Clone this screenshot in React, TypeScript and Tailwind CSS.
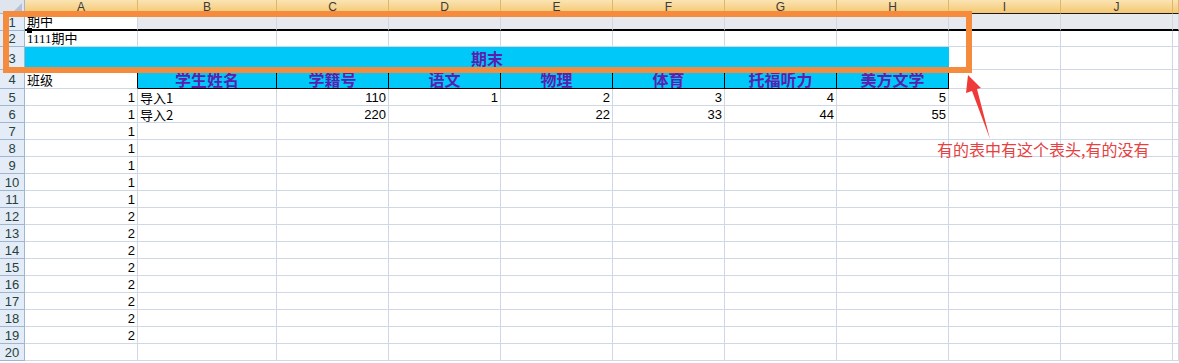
import React from 'react';

const cols = ['A', 'B', 'C', 'D', 'E', 'F', 'G', 'H', 'I', 'J', ''];
const dataCols = ['A', 'B', 'C', 'D', 'E', 'F', 'G', 'H', 'I', 'J', 'K'];

const grid = 'border-r border-b border-[#d0d7e5]';
const sans = "font-['Liberation_Sans','Noto_Sans_CJK_SC',sans-serif]";
const serif = "font-['Liberation_Serif','Noto_Sans_CJK_SC',serif]";
const cjk = "font-['Noto_Sans_CJK_SC',sans-serif]";

function RowHead({ n, className = '' }: { n: number; className?: string }) {
  return (
    <div
      className={`flex items-center justify-center border-r border-b border-[#9eb6ce] bg-[#e4ecf7] text-[13px] leading-none text-[#27413e] ${sans} ${className}`}
    >
      {n}
    </div>
  );
}

const headers4 = ['学生姓名', '学籍号', '语文', '物理', '体育', '托福听力', '美方文学'];

const aVals: (number | string)[] = [1, 1, 1, 1, 1, 1, 1, 2, 2, 2, 2, 2, 2, 2, 2, ''];
const extra: Record<number, Record<string, string | number>> = {
  5: { B: '导入1', C: 110, D: 1, E: 2, F: 3, G: 4, H: 5 },
  6: { B: '导入2', C: 220, E: 22, F: 33, G: 44, H: 55 },
};

export default function App() {
  return (
    <div className="relative h-[363px] w-[1179px] overflow-hidden bg-white">
      <div className="grid grid-cols-[25px_113px_139px_repeat(8,112px)_1fr] grid-rows-[14px_17px_16px_23px_19px_repeat(16,17px)]">
        {/* column header row */}
        <div className="relative border-r border-b border-[#9eb6ce] bg-[#dfe5ee]">
          <svg className="absolute right-[2px] bottom-[2px]" width="8" height="8" viewBox="0 0 8 8">
            <polygon points="8,0 8,8 0,8" fill="#b4c2d6" />
          </svg>
        </div>
        {cols.map((c, i) => (
          <div
            key={i}
            className={`flex items-center justify-center border-r border-b border-r-[#e0b668] border-b-[#1a1a1a] bg-gradient-to-b from-[#fbe4b3] to-[#f4c770] text-[12px] leading-none text-[#3a3a3a] ${sans}`}
          >
            {c}
          </div>
        ))}

        {/* row 1 */}
        <RowHead n={1} className="bg-[#cad9ee]" />
        {dataCols.map((c) => (
          <div
            key={c}
            className={`flex items-center overflow-hidden whitespace-nowrap border-r border-r-[#d0d7e5] border-b-2 border-b-black pl-[2px] text-[13px] leading-none text-black ${serif} ${
              c === 'A' ? 'bg-white' : 'bg-[#e8e8ef]'
            }`}
          >
            {c === 'A' ? '期中' : ''}
          </div>
        ))}

        {/* row 2 */}
        <RowHead n={2} />
        {dataCols.map((c) => (
          <div
            key={c}
            className={`flex items-center overflow-visible whitespace-nowrap pl-[2px] text-[13px] leading-none text-black ${serif} ${grid}`}
          >
            {c === 'A' ? '1111期中' : ''}
          </div>
        ))}

        {/* row 3 */}
        <RowHead n={3} />
        <div
          className={`col-span-8 flex items-center justify-center border-b border-[#d0d7e5] bg-[#00c8f8] text-[16px] font-bold leading-none text-[#5b1fb0] ${cjk}`}
        >
          期末
        </div>
        {['I', 'J', 'K'].map((c) => (
          <div key={c} className={grid} />
        ))}

        {/* row 4 */}
        <RowHead n={4} />
        <div
          className={`flex items-center border-r border-r-black border-b border-b-[#d0d7e5] pl-[2px] text-[13px] leading-none text-black ${cjk}`}
        >
          班级
        </div>
        {headers4.map((h) => (
          <div
            key={h}
            className={`flex items-end justify-center overflow-visible whitespace-nowrap border-r border-b border-black bg-[#00c8f8] pb-[1px] text-[16px] font-bold leading-[16px] text-[#5b1fb0] ${cjk}`}
          >
            {h}
          </div>
        ))}
        {['I', 'J', 'K'].map((c) => (
          <div key={c} className={grid} />
        ))}

        {/* rows 5..20 */}
        {aVals.map((a, i) => {
          const r = i + 5;
          const ex = extra[r] || {};
          return (
            <React.Fragment key={r}>
              <RowHead n={r} />
              {dataCols.map((c) => {
                const v = c === 'A' ? a : ex[c];
                const isText = typeof v === 'string' && c !== 'A';
                return (
                  <div
                    key={c}
                    className={`flex items-center overflow-hidden whitespace-nowrap text-[13px] leading-none text-black ${grid} ${
                      isText ? `justify-start pl-[2px] ${cjk}` : `justify-end pr-[2px] ${sans}`
                    }`}
                  >
                    {v ?? ''}
                  </div>
                );
              })}
            </React.Fragment>
          );
        })}
      </div>

      {/* small handle on row 1/2 border */}
      <div className="absolute left-[27px] top-[28px] h-[5px] w-[5px] bg-black" />

      {/* orange annotation rectangle */}
      <div className="absolute left-[3px] top-[11px] h-[62px] w-[969px] border-[6px] border-[#f58b3d]" />

      {/* red arrow */}
      <svg className="pointer-events-none absolute left-0 top-0" width="1179" height="363" viewBox="0 0 1179 363">
        <polygon points="968,75 981,88 977,89 990,139 972,91 966,93" fill="#ef3a3a" />
      </svg>

      {/* annotation text */}
      <div
        className={`absolute left-[937px] top-[141px] whitespace-nowrap text-[16px] leading-[16px] text-[#e8403f] ${cjk}`}
      >
        有的表中有这个表头,有的没有
      </div>
    </div>
  );
}
